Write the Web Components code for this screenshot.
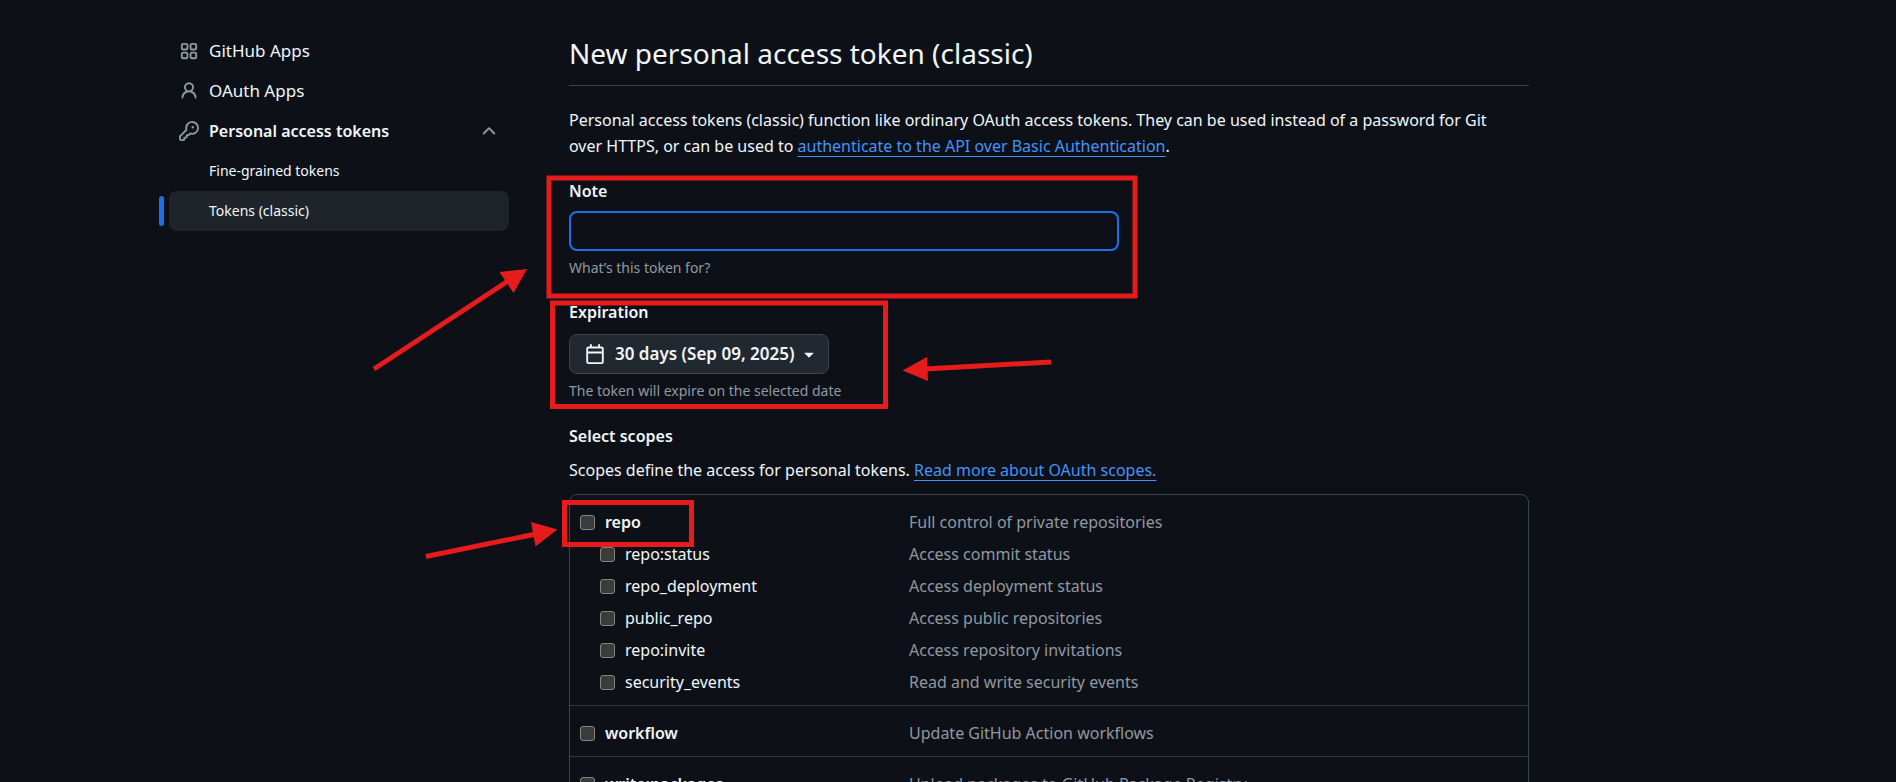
<!DOCTYPE html>
<html lang="en">
<head>
<meta charset="utf-8">
<title>New personal access token (classic)</title>
<meta name="viewport" content="width=device-width, initial-scale=1">
<style>
  :root {
    --bg: #0d1117; --fg: #f0f6fc; --muted: #9198a1; --line: #3d444d; --line-soft: #2f353d;
    --accent: #1f6feb; --link: #4493f8; --mark: #e61b1b;
  }
  body {
    margin: 0; height: 100vh; overflow: hidden;
    background: var(--bg); color: var(--fg);
    font: 16px/26px "Noto Sans", "Open Sans", sans-serif;
  }
</style>
</head>
<body>
<token-page>
  <side-nav slot="nav">
    <nav-item icon="apps">GitHub Apps</nav-item>
    <nav-item icon="person">OAuth Apps</nav-item>
    <nav-item icon="key" open>Personal access tokens</nav-item>
    <nav-item sub>Fine-grained tokens</nav-item>
    <nav-item sub current>Tokens (classic)</nav-item>
  </side-nav>
  <token-form></token-form>
  <mark-layer slot="marks"></mark-layer>
</token-page>

<script>
const define = (name, html) => customElements.define(name, class extends HTMLElement {
  connectedCallback() {
    if (this.shadowRoot) return;
    this.attachShadow({ mode: "open" }).innerHTML =
      "<style>*{box-sizing:border-box}</style>" + (typeof html === "function" ? html(this) : html);
  }
});

const icons = {
  apps: '<path d="M1.5 3.25c0-.966.784-1.75 1.75-1.75h2.5c.966 0 1.75.784 1.75 1.75v2.5A1.75 1.75 0 0 1 5.75 7.5h-2.5A1.75 1.75 0 0 1 1.5 5.75Zm7 0c0-.966.784-1.75 1.75-1.75h2.5c.966 0 1.75.784 1.75 1.75v2.5a1.75 1.75 0 0 1-1.75 1.75h-2.5A1.75 1.75 0 0 1 8.5 5.75Zm-7 7c0-.966.784-1.75 1.75-1.75h2.5c.966 0 1.75.784 1.75 1.75v2.5a1.75 1.75 0 0 1-1.75 1.75h-2.5a1.75 1.75 0 0 1-1.75-1.75Zm7 0c0-.966.784-1.75 1.75-1.75h2.5c.966 0 1.75.784 1.75 1.75v2.5a1.75 1.75 0 0 1-1.75 1.75h-2.5a1.75 1.75 0 0 1-1.75-1.75ZM3.25 3a.25.25 0 0 0-.25.25v2.5c0 .138.112.25.25.25h2.5A.25.25 0 0 0 6 5.75v-2.5A.25.25 0 0 0 5.75 3Zm7 0a.25.25 0 0 0-.25.25v2.5c0 .138.112.25.25.25h2.5a.25.25 0 0 0 .25-.25v-2.5a.25.25 0 0 0-.25-.25Zm-7 7a.25.25 0 0 0-.25.25v2.5c0 .138.112.25.25.25h2.5a.25.25 0 0 0 .25-.25v-2.5a.25.25 0 0 0-.25-.25Zm7 0a.25.25 0 0 0-.25.25v2.5c0 .138.112.25.25.25h2.5a.25.25 0 0 0 .25-.25v-2.5a.25.25 0 0 0-.25-.25Z"/>',
  person: '<path d="M10.561 8.073a6.005 6.005 0 0 1 3.432 5.142.75.75 0 1 1-1.498.07 4.5 4.5 0 0 0-8.99 0 .75.75 0 0 1-1.498-.07 6.004 6.004 0 0 1 3.431-5.142 3.999 3.999 0 1 1 5.123 0ZM10.5 5a2.5 2.5 0 1 0-5 0 2.5 2.5 0 0 0 5 0Z"/>',
  key: '<path d="M10.5 0a5.499 5.499 0 1 1-1.288 10.848l-.932.932a.749.749 0 0 1-.53.22H7v.75a.749.749 0 0 1-.22.53l-.5.5a.749.749 0 0 1-.53.22H5v.75a.749.749 0 0 1-.22.53l-.5.5a.749.749 0 0 1-.53.22h-2A1.75 1.75 0 0 1 0 14.25v-2c0-.199.079-.389.22-.53l4.932-4.932A5.5 5.5 0 0 1 10.5 0Zm-4 5.5c-.001.431.069.86.205 1.269a.75.75 0 0 1-.181.768L1.5 12.56v1.69c0 .138.112.25.25.25h1.69l.06-.06v-1.19a.75.75 0 0 1 .75-.75h1.19l.06-.06v-1.19a.75.75 0 0 1 .75-.75h1.19l1.023-1.025a.75.75 0 0 1 .768-.18A4 4 0 1 0 6.5 5.5ZM11 6a1 1 0 1 1 0-2 1 1 0 0 1 0 2Z"/>',
  up: '<path d="M3.22 10.53a.749.749 0 0 1 0-1.06l4.25-4.25a.749.749 0 0 1 1.06 0l4.25 4.25a.749.749 0 1 1-1.06 1.06L8 6.811 4.28 10.53a.749.749 0 0 1-1.06 0Z"/>',
  calendar: '<path d="M4.75 0a.75.75 0 0 1 .75.75V2h5V.75a.75.75 0 0 1 1.5 0V2h1.25c.966 0 1.75.784 1.75 1.75v10.5A1.75 1.75 0 0 1 13.25 16H2.75A1.75 1.75 0 0 1 1 14.25V3.75C1 2.784 1.784 2 2.75 2H4V.75A.75.75 0 0 1 4.75 0ZM2.5 7.5v6.75c0 .138.112.25.25.25h10.5a.25.25 0 0 0 .25-.25V7.5Zm10.75-4H2.75a.25.25 0 0 0-.25.25V6h11V3.75a.25.25 0 0 0-.25-.25Z"/>',
  caret: '<path d="m4.427 7.427 3.396 3.396a.25.25 0 0 0 .354 0l3.396-3.396A.25.25 0 0 0 11.396 7H4.604a.25.25 0 0 0-.177.427Z"/>'
};

define("ui-icon", el => `
  <style>:host{display:block;width:20px;height:20px;flex:none} svg{display:block;fill:currentColor}</style>
  <svg width="20" height="20" viewBox="0 0 16 16" aria-hidden="true">${icons[el.getAttribute("name")]}</svg>`);

define("token-page", `
  <style>
    :host{display:block;position:relative}
    .grid{display:grid;grid-template-columns:340px minmax(0,1fr);gap:60px;padding:31px 367px 0 169px}
    @media (max-width:1200px){.grid{padding-right:40px;padding-left:40px}}
  </style>
  <div class="grid"><slot name="nav"></slot><main><slot></slot></main></div>
  <slot name="marks"></slot>`);

define("side-nav", `<style>:host{display:block}</style><nav aria-label="Developer settings"><slot></slot></nav>`);

define("nav-item", el => {
  const sub = el.hasAttribute("sub");
  const inner = `${sub ? "" : `<ui-icon name="${el.getAttribute("icon")}"></ui-icon>`}<span><slot></slot></span>`;
  return `
  <style>
    :host{display:block;position:relative}
    a,button{display:flex;align-items:center;gap:10px;width:100%;height:40px;padding:0 10px;border:0;border-radius:8px;
      background:none;color:var(--fg);font:inherit;text-align:left;text-decoration:none}
    a{font-size:17px}
    span{flex:1}
    ui-icon{color:var(--muted)}
    :host([open]) button{font-weight:600}
    :host([sub]) a{padding-left:40px;font-size:14px}
    :host([current]) a{background:#1f242b}
    :host([current])::before{content:"";position:absolute;left:-10px;top:5px;width:5px;height:30px;border-radius:5px;background:var(--accent)}
  </style>
  ${el.hasAttribute("open")
    ? `<button type="button" aria-expanded="true">${inner}<ui-icon name="up"></ui-icon></button>`
    : `<a href="#"${el.hasAttribute("current") ? ' aria-current="page"' : ""}>${inner}</a>`}`;
});

define("scope-group", el => {
  const rows = JSON.parse(el.getAttribute("rows"));
  return `
  <style>
    :host{display:block;padding:11px 0 7px;border-bottom:1px solid var(--line-soft)}
    ul{list-style:none;margin:0;padding:0}
    li{display:grid;grid-template-columns:329px minmax(0,1fr);align-items:center;height:32px;padding-left:10px}
    label{display:flex;align-items:center;gap:10px}
    .child label{padding-left:20px}
    .top label{font-weight:600}
    input{appearance:none;width:15px;height:15px;margin:0;border:1px solid #858585;border-radius:3px;background:#3b3b3b}
    .desc{color:var(--muted)}
  </style>
  <ul>${rows.map(([n, d], i) => `<li class="${i ? "child" : "top"}"><label><input type="checkbox">${n}</label><span class="desc">${d}</span></li>`).join("")}</ul>`;
});

define("token-form", () => {
  const group = rows => `<scope-group rows='${JSON.stringify(rows)}'></scope-group>`;
  return `
  <style>
    :host{display:block}
    h1{margin:0;height:55px;border-bottom:1px solid var(--line);font-size:28px;line-height:44px;font-weight:400}
    p{margin:0}
    a{color:var(--link);text-underline-offset:4px;text-decoration-thickness:1px}
    .intro{margin-top:21px;padding-right:20px}
    .field{display:flex;flex-direction:column;align-items:flex-start;margin-top:19px}
    .title{font-weight:600;font-size:16px}
    input{width:550px;max-width:100%;height:40px;margin-top:7px;padding:0 15px;border:2px solid var(--accent);border-radius:8px;background:var(--bg);color:var(--fg);font:inherit;outline:0}
    button{display:flex;align-items:center;height:40px;margin-top:9px;padding:0 9px 0 15px;border:1px solid var(--line);border-radius:8px;background:#212830;color:var(--fg);font:inherit;font-size:17px;font-weight:600}
    button span{margin:0 5px 0 10px}
    small{display:block;margin-top:5px;font-size:14px;line-height:24px;color:var(--muted)}
    h2{margin:20px 0 0;font-size:16px;line-height:26px;font-weight:600}
    .scopes{margin-top:8px}
    .card{margin-top:11px;border:1px solid var(--line);border-radius:8px}
  </style>
  <h1>New personal access token (classic)</h1>
  <p class="intro">Personal access tokens (classic) function like ordinary OAuth access tokens. They can be used instead of a password for Git over HTTPS, or can be used to <a href="#">authenticate to the API over Basic Authentication</a>.</p>
  <div class="field">
    <label class="title" for="note">Note</label>
    <input id="note" type="text">
    <small>What’s this token for?</small>
  </div>
  <div class="field">
    <label class="title" for="expiry">Expiration</label>
    <button id="expiry" type="button"><ui-icon name="calendar"></ui-icon><span>30 days (Sep 09, 2025)</span><ui-icon name="caret"></ui-icon></button>
    <small>The token will expire on the selected date</small>
  </div>
  <h2>Select scopes</h2>
  <p class="scopes">Scopes define the access for personal tokens. <a href="#">Read more about OAuth scopes.</a></p>
  <div class="card">
    ${group([["repo", "Full control of private repositories"], ["repo:status", "Access commit status"], ["repo_deployment", "Access deployment status"], ["public_repo", "Access public repositories"], ["repo:invite", "Access repository invitations"], ["security_events", "Read and write security events"]])}
    ${group([["workflow", "Update GitHub Action workflows"]])}
    ${group([["write:packages", "Upload packages to GitHub Package Registry"]])}
  </div>`;
});

/* Red frames and arrows that lie over the form. */
define("mark-layer", `
  <style>
    :host{position:absolute;left:0;top:0;pointer-events:none}
    svg{display:block;overflow:visible}
  </style>
  <svg width="1200" height="600" viewBox="0 0 1200 600" aria-hidden="true">
    <g fill="none" stroke="var(--mark)" stroke-width="5">
      <rect x="549" y="178" width="586" height="118"/>
      <rect x="552.5" y="303" width="333" height="103.500"/>
      <rect x="564.500" y="502.500" width="127" height="42"/>
      <path d="M374 369 508 281M1051 362 925 369M426 556.500 536 534"/>
    </g>
    <path fill="var(--mark)" d="M527 269 499.500 272 513.500 293ZM902.500 370.500 927 357 928 381ZM557.500 529.500 531 522 535.500 546.500Z"/>
  </svg>`);
</script>
</body>
</html>
